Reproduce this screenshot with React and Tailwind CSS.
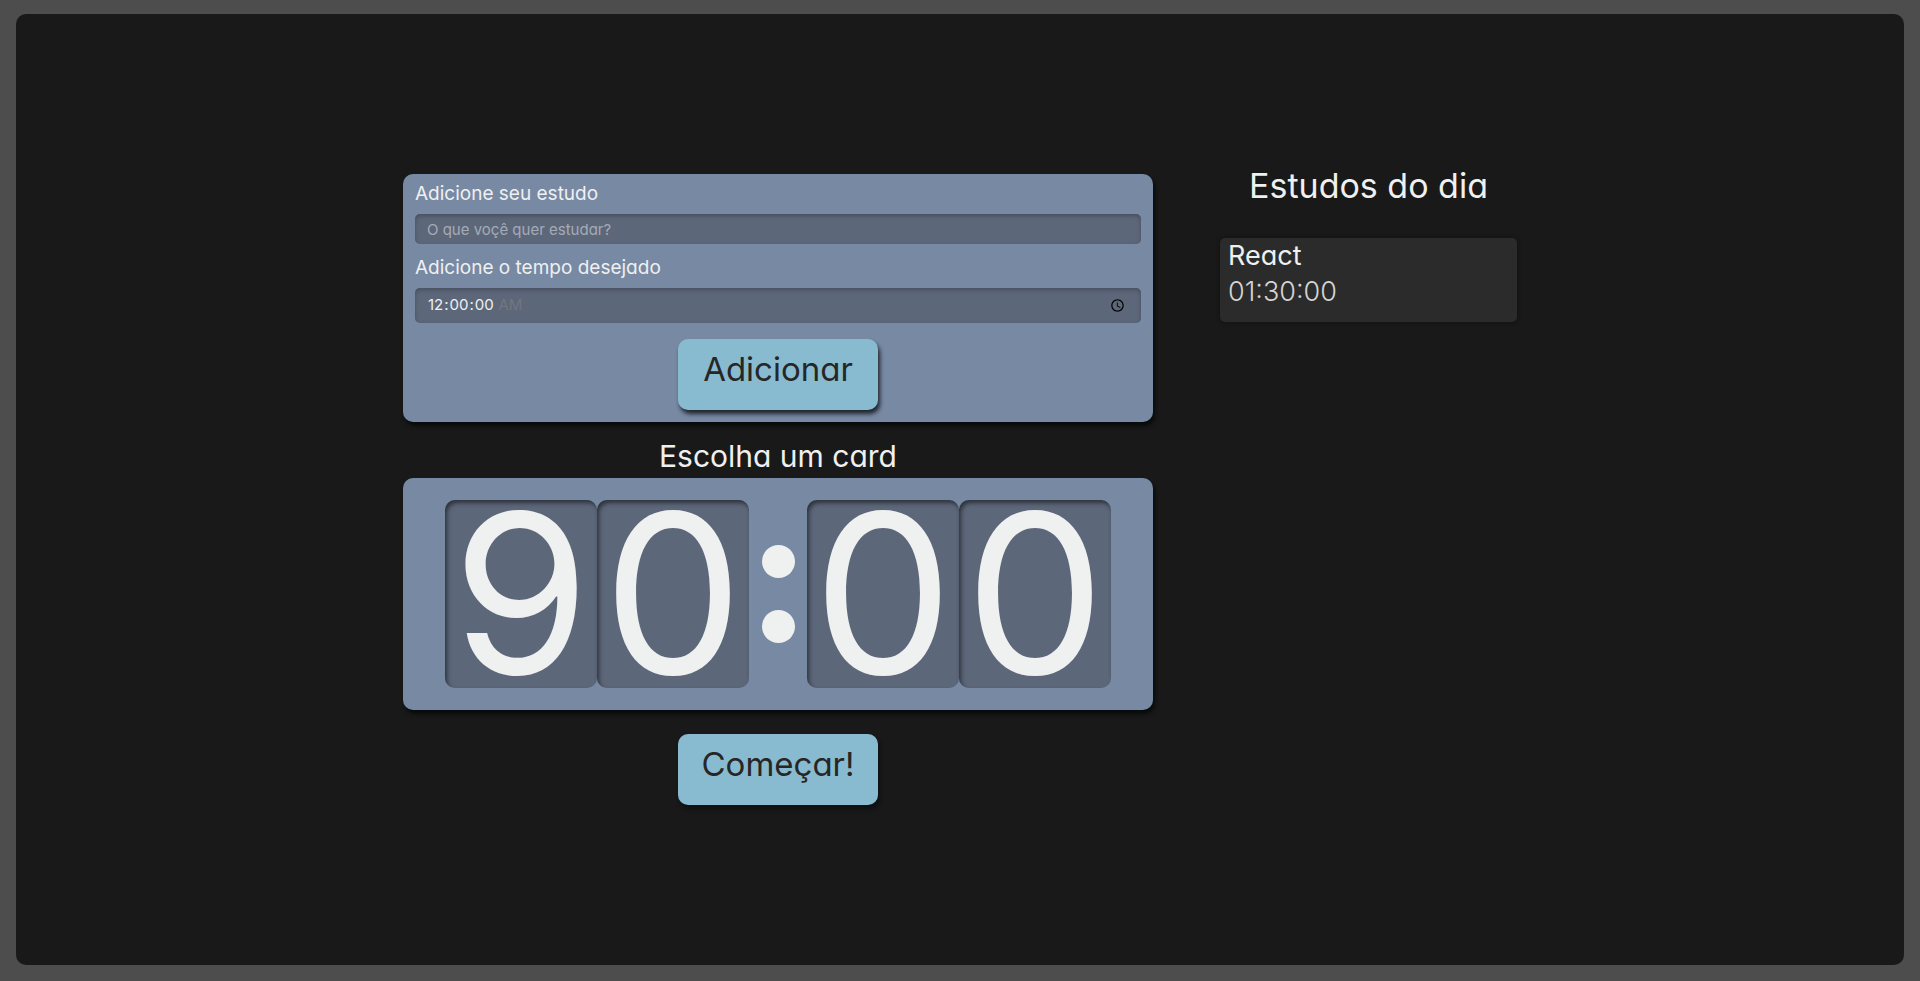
import { useState } from "react";

const INITIAL_STUDIES = [{ id: 1, name: "React", time: "01:30:00" }];

const CARD = "rounded-[10px] bg-[#7889a4] shadow-[2px_4px_4px_#080b0b]";
const FIELD =
  "block w-full rounded-[5px] bg-[#5d677a] px-3 text-[15px] text-[#eff0f0] outline-none shadow-[inset_0_2px_4px_#474f5f] placeholder:text-[#a5abb6]";
const LABEL = "block text-[19px] leading-6 text-[#eff0f0]";

function Button({ children, type = "button", onClick }) {
  return (
    <button
      type={type}
      onClick={onClick}
      className="mx-auto block h-[71px] w-[200px] rounded-[10px] bg-[#88bbd0] pb-[10px] text-[33px] font-normal text-[#272626] shadow-[2px_4px_4px_#0a0c10cc]"
    >
      {children}
    </button>
  );
}

function StudyForm({ onAdd }) {
  const [name, setName] = useState("");
  const [time, setTime] = useState("00:00:00");

  function submit(event) {
    event.preventDefault();
    onAdd({ id: Date.now(), name, time });
    setName("");
    setTime("00:00:00");
  }

  return (
    <form onSubmit={submit} className={`${CARD} px-3 pt-2 pb-3`}>
      <label htmlFor="study" className={LABEL}>
        Adicione seu estudo
      </label>
      <input
        id="study"
        type="text"
        required
        value={name}
        onChange={(event) => setName(event.target.value)}
        placeholder="O que voçê quer estudar?"
        className={`${FIELD} mt-2 h-[30px]`}
      />
      <label htmlFor="time" className={`${LABEL} mt-3`}>
        Adicione o tempo desejado
      </label>
      <input
        id="time"
        type="time"
        step="1"
        min="00:00:00"
        max="01:30:00"
        required
        value={time}
        onChange={(event) => setTime(event.target.value)}
        className={`${FIELD} mt-2 mb-4 h-[35px] [&::-webkit-datetime-edit-ampm-field]:opacity-60`}
      />
      <Button type="submit">Adicionar</Button>
    </form>
  );
}

function Digit({ value }) {
  return (
    <span className="flex h-[188px] flex-1 items-center justify-center rounded-[10px] bg-[#5d677a] shadow-[inset_2px_3px_4px_#2d333c]">
      {value}
    </span>
  );
}

function Stopwatch({ digits }) {
  return (
    <section>
      <p className="pt-[14px] pb-[2px] text-center text-[30px] leading-10 font-normal">
        Escolha um card
      </p>
      <div
        className={`${CARD} flex items-center px-[42px] py-[22px] text-[222px] leading-none font-normal`}
      >
        <Digit value={digits[0]} />
        <Digit value={digits[1]} />
        <span className="flex h-[188px] w-[58px] flex-col items-center justify-center gap-8">
          <span className="size-[33px] rounded-full bg-[#eff0f0]" />
          <span className="size-[33px] rounded-full bg-[#eff0f0]" />
        </span>
        <Digit value={digits[2]} />
        <Digit value={digits[3]} />
      </div>
      <div className="pt-6">
        <Button>Começar!</Button>
      </div>
    </section>
  );
}

function StudyList({ studies }) {
  return (
    <aside>
      <h2 className="mb-10 text-center text-[34px] leading-6 font-normal">
        Estudos do dia
      </h2>
      <ul className="flex flex-col gap-2">
        {studies.map((study) => (
          <li
            key={study.id}
            className="rounded-[5px] bg-[#2b2b2b] px-2 pb-3 shadow-[0_0_4px_#111111]"
          >
            <h3 className="text-[27px] leading-9">{study.name}</h3>
            <span className="block text-[27px] leading-9 font-light text-[#d4d4d4]">
              {study.time}
            </span>
          </li>
        ))}
      </ul>
    </aside>
  );
}

export default function App() {
  const [studies, setStudies] = useState(INITIAL_STUDIES);

  return (
    <div className="flex min-h-screen bg-[#4d4d4d] px-4 pt-[14px] pb-4 font-['Inter',sans-serif] text-[#eff0f0] [font-feature-settings:'cv11']">
      <main className="flex w-full items-center justify-center rounded-[10px] bg-[#191919] px-4">
        <div className="grid w-full max-w-[1114px] grid-cols-[minmax(0,750fr)_minmax(0,297fr)] gap-[67px]">
          <div>
            <StudyForm onAdd={(study) => setStudies([...studies, study])} />
            <Stopwatch digits={["9", "0", "0", "0"]} />
          </div>
          <StudyList studies={studies} />
        </div>
      </main>
    </div>
  );
}
